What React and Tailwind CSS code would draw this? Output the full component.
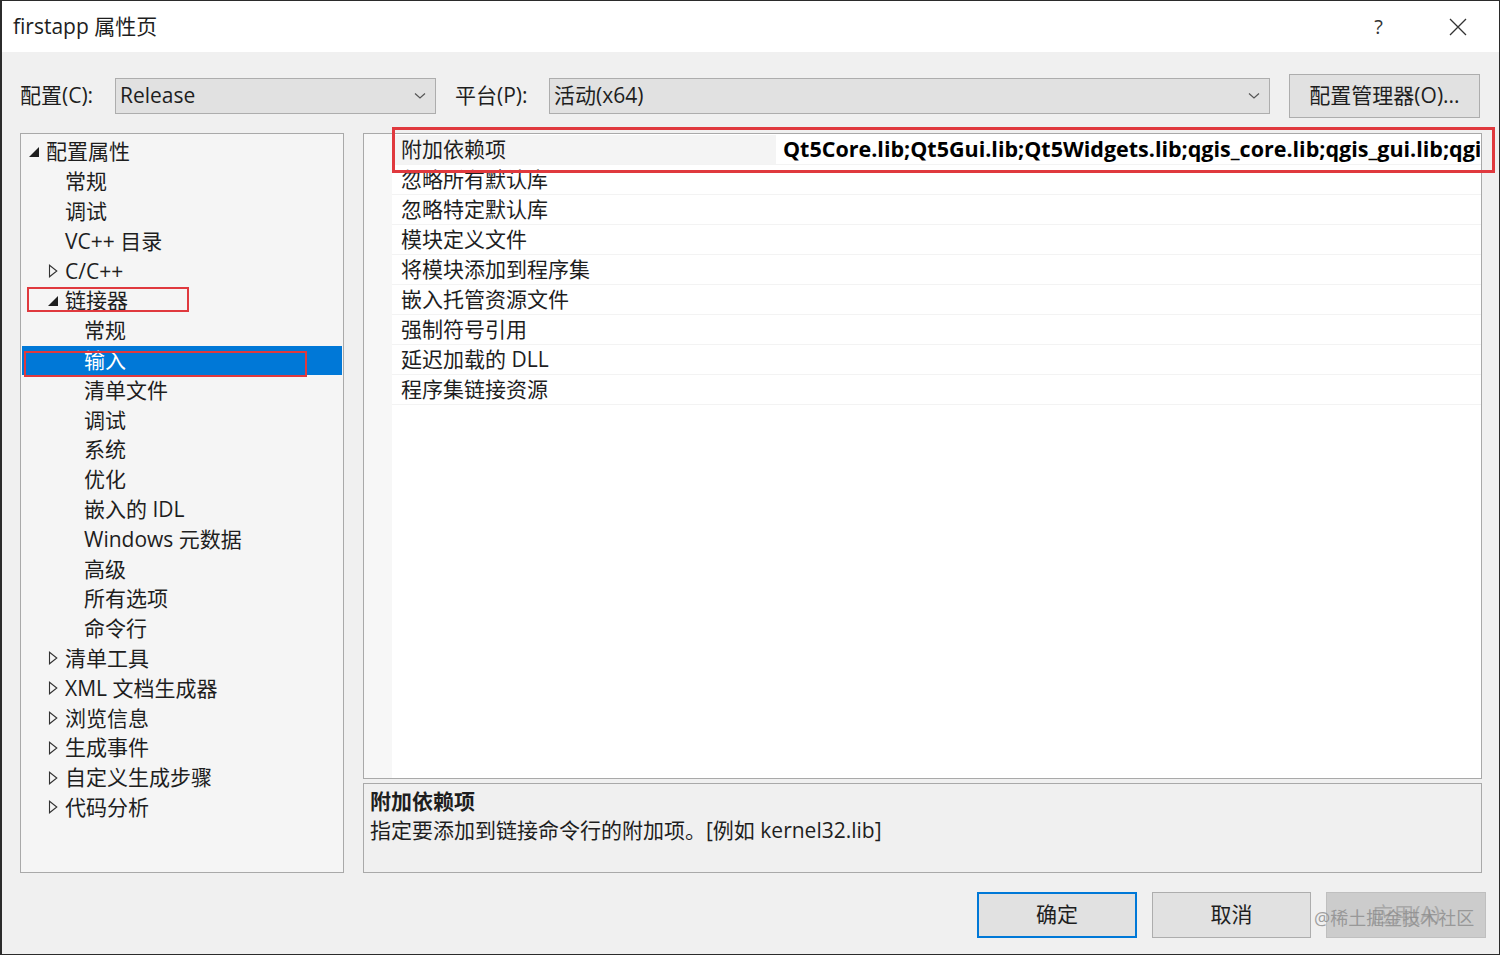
import React from "react";

const font = { fontFamily: '"Open Sans", "Noto Sans CJK SC", sans-serif' };

const tree = [
  { text: "配置属性", level: 0, icon: "open" },
  { text: "常规", level: 1 },
  { text: "调试", level: 1 },
  { text: "VC++ 目录", level: 1 },
  { text: "C/C++", level: 1, icon: "closed" },
  { text: "链接器", level: 1, icon: "open" },
  { text: "常规", level: 2 },
  { text: "输入", level: 2, selected: true },
  { text: "清单文件", level: 2 },
  { text: "调试", level: 2 },
  { text: "系统", level: 2 },
  { text: "优化", level: 2 },
  { text: "嵌入的 IDL", level: 2 },
  { text: "Windows 元数据", level: 2 },
  { text: "高级", level: 2 },
  { text: "所有选项", level: 2 },
  { text: "命令行", level: 2 },
  { text: "清单工具", level: 1, icon: "closed" },
  { text: "XML 文档生成器", level: 1, icon: "closed" },
  { text: "浏览信息", level: 1, icon: "closed" },
  { text: "生成事件", level: 1, icon: "closed" },
  { text: "自定义生成步骤", level: 1, icon: "closed" },
  { text: "代码分析", level: 1, icon: "closed" },
];

const props = [
  "附加依赖项",
  "忽略所有默认库",
  "忽略特定默认库",
  "模块定义文件",
  "将模块添加到程序集",
  "嵌入托管资源文件",
  "强制符号引用",
  "延迟加载的 DLL",
  "程序集链接资源",
];

const Chevron = () => (
  <svg width="12" height="8" viewBox="0 0 12 8" className="shrink-0">
    <path d="M1 1.5 L6 6 L11 1.5" fill="none" stroke="#555" strokeWidth="1.2" />
  </svg>
);

const TreeIcon = ({ type }) => {
  if (type === "open")
    return (
      <svg width="10" height="10" viewBox="0 0 10 10">
        <path d="M10 0 L10 10 L0 10 Z" fill="#1e1e1e" />
      </svg>
    );
  return (
    <svg width="10" height="14" viewBox="0 0 10 14">
      <path d="M1.5 1.2 L8.8 7 L1.5 12.8 Z" fill="none" stroke="#333" strokeWidth="1.1" />
    </svg>
  );
};

const Combo = ({ value, width }) => (
  <div
    className={`h-[36px] bg-[#e1e1e1] border border-[#adadad] flex items-center justify-between pl-[4px] pr-[9px] text-[21px] text-[#1e1e1e] ${width}`}
  >
    <span>{value}</span>
    <Chevron />
  </div>
);

export default function App() {
  return (
    <div
      className="w-[1500px] h-[955px] bg-[#f0f0f0] border border-l-2 border-[#2b2b2b] flex flex-col overflow-hidden text-[#1e1e1e]"
      style={font}
    >
      {/* title bar */}
      <div className="h-[51px] bg-white flex items-center shrink-0">
        <span className="ml-[11px] text-[21px]">firstapp 属性页</span>
        <span className="ml-auto text-[20px] text-[#333] mr-[66px]">?</span>
        <svg width="18" height="18" viewBox="0 0 18 18" className="mr-[32px]">
          <path d="M1 1 L17 17 M17 1 L1 17" stroke="#333" strokeWidth="1.3" />
        </svg>
      </div>

      {/* config row */}
      <div className="flex items-center mt-[22px] pl-[18px] h-[44px]">
        <span className="w-[95px] text-[21px]">配置(C):</span>
        <Combo value="Release" width="w-[321px]" />
        <span className="ml-[19px] w-[94px] text-[21px]">平台(P):</span>
        <Combo value="活动(x64)" width="w-[721px]" />
        <div className="ml-[19px] w-[191px] h-[44px] bg-[#e1e1e1] border border-[#adadad] flex items-center justify-center text-[21px]">
          配置管理器(O)...
        </div>
      </div>

      {/* panels */}
      <div className="flex mt-[15px] pl-[18px] gap-[19px] h-[740px]">
        {/* tree */}
        <div className="relative w-[324px] h-full bg-[#f5f5f5] border border-[#a9a9a9] pt-[3px] pl-[1px] pr-[1px]">
          {tree.map((item, i) => (
            <div
              key={i}
              className={`h-[29.8px] flex items-center text-[21px] ${
                item.selected ? "bg-[#0078d7] text-white" : ""
              }`}
            >
              <div
                className={`flex items-center w-[19px] pl-[2px] shrink-0 ${
                  item.level === 0 ? "ml-[5px]" : item.level === 1 ? "ml-[24px]" : "ml-[43px]"
                }`}
              >
                {item.icon && <TreeIcon type={item.icon} />}
              </div>
              <span className="leading-none">{item.text}</span>
            </div>
          ))}
          <div className="absolute left-[6px] top-[153px] w-[162px] h-[25px] border-2 border-[#e0393e]" />
          <div className="absolute left-[3px] top-[217px] w-[283px] h-[26px] border-2 border-[#e0393e]" />
        </div>

        {/* right column */}
        <div className="flex flex-col w-[1119px] gap-[4px]">
          <div className="relative h-[646px] bg-white border border-[#a9a9a9] flex">
            <div className="w-[28px] bg-[#f7f7f7] shrink-0" />
            <div className="flex-1 flex flex-col overflow-hidden pt-[1px]">
              {props.map((p, i) => (
                <div
                  key={i}
                  className="h-[30px] flex items-center text-[21px] border-b border-[#f3f3f3] shrink-0"
                >
                  <div
                    className={`w-[384px] h-full flex items-center pl-[9px] shrink-0 ${
                      i === 0 ? "bg-[#f4f4f4]" : ""
                    }`}
                  >
                    {p}
                  </div>
                  {i === 0 && (
                    <div className="w-[704px] h-full flex items-center pl-[7px] whitespace-nowrap overflow-hidden font-bold text-[21.5px] text-black">
                      Qt5Core.lib;Qt5Gui.lib;Qt5Widgets.lib;qgis_core.lib;qgis_gui.lib;qgis
                    </div>
                  )}
                </div>
              ))}
            </div>
            <div className="absolute left-[28px] top-[-7px] w-[1103px] h-[46px] border-[3px] border-[#e0393e]" />
          </div>
          <div className="h-[90px] bg-[#f0f0f0] border border-[#a9a9a9] pl-[6px] pt-[2px]">
            <div className="font-bold text-[21px] leading-[30px]">附加依赖项</div>
            <div className="text-[21px] leading-[29px]">指定要添加到链接命令行的附加项。[例如 kernel32.lib]</div>
          </div>
        </div>
      </div>

      {/* buttons */}
      <div className="flex mt-[19px] pl-[975px] gap-[15px] h-[46px]">
        <div className="w-[160px] h-full bg-[#e1e1e1] border-2 border-[#0078d7] flex items-center justify-center text-[21px]">
          确定
        </div>
        <div className="w-[159px] h-full bg-[#e1e1e1] border border-[#adadad] flex items-center justify-center text-[21px]">
          取消
        </div>
        <div className="relative w-[160px] h-full bg-[#cccccc] border border-[#bfbfbf] flex items-center justify-center text-[21px] text-[#a8a8a8]">
          应用(A)
          <span className="absolute left-[-13px] top-[12px] text-[18px] text-[#8a8a8a]/80 whitespace-nowrap">
            @稀土掘金技术社区
          </span>
        </div>
      </div>
    </div>
  );
}
